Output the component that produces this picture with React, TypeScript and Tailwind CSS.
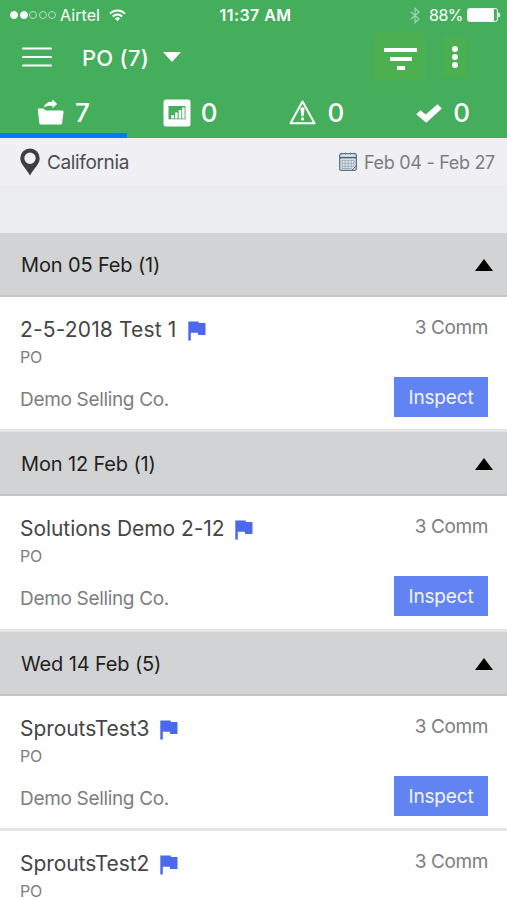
import type { ReactNode } from "react";
import clsx from "clsx";

interface Inspection {
  title: string;
  type: string;
  company?: string;
  comm: number;
  tracking: string;
}

interface DayGroup {
  label: string;
  items: Inspection[];
}

const groups: DayGroup[] = [
  {
    label: "Mon 05 Feb (1)",
    items: [
      { title: "2-5-2018 Test 1", type: "PO", company: "Demo Selling Co.", comm: 3, tracking: "tracking-[0.15px]" },
    ],
  },
  {
    label: "Mon 12 Feb (1)",
    items: [
      { title: "Solutions Demo 2-12", type: "PO", company: "Demo Selling Co.", comm: 3, tracking: "tracking-[-0.06px]" },
    ],
  },
  {
    label: "Wed 14 Feb (5)",
    items: [
      { title: "SproutsTest3", type: "PO", company: "Demo Selling Co.", comm: 3, tracking: "tracking-[-0.06px]" },
      { title: "SproutsTest2", type: "PO", comm: 3, tracking: "tracking-[-0.06px]" },
    ],
  },
];

function WifiIcon() {
  return (
    <svg width="17" height="13" viewBox="0 0 17 13" fill="none" stroke="white" strokeWidth="2">
      <path d="M1 4.6a10.6 10.6 0 0 1 15 0" />
      <path d="M3.8 7.5a6.7 6.7 0 0 1 9.4 0" />
      <path d="M8.5 12.3 5.9 9.6a3.7 3.7 0 0 1 5.2 0z" fill="white" stroke="none" />
    </svg>
  );
}

function BluetoothIcon() {
  return (
    <svg width="10" height="17" viewBox="0 0 10 17" fill="none" stroke="#9ed6ae" strokeWidth="1.2">
      <path d="M.8 4.8 9 12 5 15.7V1.3L9 5 .8 12.2" />
    </svg>
  );
}

function BatteryIcon() {
  return (
    <svg width="34" height="14" viewBox="0 0 34 14">
      <rect x=".6" y=".6" width="29.8" height="12.8" rx="1.8" fill="none" stroke="white" />
      <rect x="1" y="1" width="26" height="12" rx="1" fill="white" />
      <path d="M31.4 4.5c2.4.6 2.4 4.4 0 5z" fill="white" />
    </svg>
  );
}

function MenuIcon() {
  return (
    <svg width="30" height="20" viewBox="0 0 30 20" stroke="white" strokeWidth="2.2" strokeLinecap="round">
      <path d="M1.1 1.5h27.8M1.1 10h27.8M1.1 18.5h27.8" />
    </svg>
  );
}

function FolderIcon() {
  return (
    <svg width="27" height="27" viewBox="0 0 27 27" fill="white">
      <path d="M2 9.6h4.6l2 2h16.2c1.200 0 1.900.7 1.700 1.700l-1.400 10.600c-.2 1-.8 1.500-1.800 1.500H4c-1 0-1.600-.6-1.700-1.500L.9 10.900c-.1-.8.4-1.300 1.100-1.300z" />
      <path d="M6.8 8.600c1-4 4.200-5.900 8.700-5.900V.6l4.700 4.300-4.700 4.300V7c-3.200-.5-6.100-.2-8.700 1.600z" />
    </svg>
  );
}

function ChartIcon() {
  return (
    <svg width="28" height="28" viewBox="0 0 28 28">
      <rect x=".5" y=".5" width="27" height="27" rx="2.5" fill="white" />
      <rect x="5.5" y="7" width="17" height="13.3" fill="#44ae5c" />
      <path d="M8.300 16h2.600v3.500H8.300zM12 13.500h2.600v6H12zM15.700 11h2.600v8.500h-2.600zM19.200 8.500h2.400v11h-2.400z" fill="white" />
    </svg>
  );
}

function WarningIcon() {
  return (
    <svg width="27" height="25" viewBox="0 0 27 25">
      <path d="M13.500 1.500 25.500 23.300H1.500z" fill="none" stroke="white" strokeWidth="2" strokeLinejoin="round" />
      <path d="M11.500 8.800c0-2 4-2 4 0l-.9 7.400h-2.200z" fill="white" />
      <circle cx="13.500" cy="18.900" r="1.700" fill="white" />
    </svg>
  );
}

function CheckIcon() {
  return (
    <svg width="26" height="20" viewBox="0 0 26 20">
      <path d="M.2 11.300 4.400 7.200 9.800 11.500 21.500 1.200l4.400 4.300L10.300 19.800z" fill="white" />
    </svg>
  );
}

function PinIcon() {
  return (
    <svg width="20" height="28" viewBox="0 0 20 28">
      <path
        d="M10 .5A9.700 9.700 0 0 0 .3 10.200C.3 16.200 6.300 20.500 10 27.500c3.700-7 9.700-11.300 9.700-17.300A9.700 9.700 0 0 0 10 .5zm0 4a5.700 5.700 0 1 1 0 11.400 5.700 5.700 0 0 1 0-11.400z"
        fill="#3d3e42"
      />
    </svg>
  );
}

function CalendarIcon() {
  return (
    <svg width="18" height="19" viewBox="0 0 18 19" fill="none">
      <rect x=".7" y="1.700" width="16.600" height="16.600" rx="1.500" fill="#e3e8ed" stroke="#577187" strokeWidth="1.300" />
      <path d="M1 5.600h16" stroke="#4a657c" strokeWidth="1.600" />
      <path d="M3 .5v2M6.500 .5v2M11.500 .5v2M15 .5v2" stroke="#70869a" />
      <path
        d="M3 8.300h12M3 11.300h12M3 14.300h12M3.200 8v8.500M6.200 8v8.500M9.200 8v8.500M12.200 8v8.500M15 8v6.500M3 16.500h9.500"
        stroke="#98a7b5"
        strokeWidth=".9"
      />
      <path d="M13 18l4-4" stroke="#577187" />
    </svg>
  );
}

function FlagIcon() {
  return (
    <svg className="mt-[2px] shrink-0" width="18" height="20" viewBox="0 0 18 20">
      <path d="M.3.500H10.800v1.600h6.700v12H10v-2.300H2.800V19.500H.3z" fill="#4b68ee" />
    </svg>
  );
}

const tabs: { icon: ReactNode; count: number; className: string }[] = [
  { icon: <FolderIcon />, count: 7, className: "gap-[11px] pl-[37px]" },
  { icon: <ChartIcon />, count: 0, className: "gap-[10px] pl-[36px]" },
  { icon: <WarningIcon />, count: 0, className: "gap-[12px] pl-[35px]" },
  { icon: <CheckIcon />, count: 0, className: "gap-[11px] pl-[36px]" },
];

function StatusBar() {
  return (
    <div className="grid h-[30px] grid-cols-3 items-center text-[16px]">
      <div className="flex items-center pl-[10px]">
        <div className="flex gap-[1.5px]">
          {[true, true, false, false, false].map((on, i) => (
            <span
              key={i}
              className={clsx("size-[8px] rounded-full border", on ? "border-white bg-white" : "border-[#b5dfbf]")}
            />
          ))}
        </div>
        <span className="ml-[4px] mr-[9px] tracking-[0.07px]">Airtel</span>
        <WifiIcon />
      </div>
      <div className="flex justify-center pl-[4px]">
        <span className="font-semibold tracking-[0.44px]">11:37 AM</span>
      </div>
      <div className="flex items-center justify-end pr-[6px]">
        <BluetoothIcon />
        <span className="ml-[9px] mr-[4px] tracking-[-0.5px]">88%</span>
        <BatteryIcon />
      </div>
    </div>
  );
}

function NavBar() {
  return (
    <div className="flex h-[54px] items-center pl-[22px]">
      <button>
        <MenuIcon />
      </button>
      <span className="ml-[30px] mt-[2px] text-[22px] font-medium tracking-[0.23px]">PO (7)</span>
      <svg className="ml-[14px]" width="18" height="10" viewBox="0 0 18 10">
        <path d="M0 0h18L9 10z" fill="white" />
      </svg>
      <button className="ml-auto flex h-[48px] w-[52px] flex-col items-center justify-center gap-[5px] bg-[#4caf50] pl-[3px] pt-[4px]">
        <span className="h-[4px] w-[33px] bg-white" />
        <span className="h-[4px] w-[22px] bg-white" />
        <span className="h-[4px] w-[8px] bg-white" />
      </button>
      <button className="ml-[18px] mr-[40px] flex h-[40px] w-[24px] flex-col items-center justify-center gap-[2px] bg-[#4caf50]">
        <span className="size-[6px] rounded-full bg-white" />
        <span className="size-[6px] rounded-full bg-white" />
        <span className="size-[6px] rounded-full bg-white" />
      </button>
    </div>
  );
}

function TabBar() {
  return (
    <div className="grid h-[54px] grid-cols-4">
      {tabs.map((tab, i) => (
        <div
          key={i}
          className={clsx(
            "flex items-center border-b-[5px] pt-[8px]",
            tab.className,
            i === 0 ? "border-[#087bfa]" : "border-transparent"
          )}
        >
          {tab.icon}
          <span className="text-[26px] font-medium leading-none">{tab.count}</span>
        </div>
      ))}
    </div>
  );
}

function GroupHeader({ label }: { label: string }) {
  return (
    <div className="flex h-[64px] items-center justify-between border-b-2 border-[#c3c4c6] bg-[#d2d3d5] pl-[21px] pr-[14px] pt-[2px]">
      <h2 className="text-[20px] tracking-[-0.14px] text-[#1f1f20]">{label}</h2>
      <svg width="18" height="12" viewBox="0 0 18 12">
        <path d="M9 0l9 12H0z" fill="black" />
      </svg>
    </div>
  );
}

function InspectionRow({ item }: { item: Inspection }) {
  return (
    <div className="flex h-[135.4px] justify-between border-b-[3px] border-[#e4e5e6] bg-white pl-[20px] pr-[19px] text-[#7d7d7f]">
      <div className="flex flex-col items-start pt-[20px]">
        <div className="flex h-[26px] items-center gap-[11px]">
          <h3 className={clsx("text-[21px] leading-[26px] text-[#454547]", item.tracking)}>{item.title}</h3>
          <FlagIcon />
        </div>
        <p className="mt-[3px] text-[16px] leading-[22px] tracking-[-0.23px]">{item.type}</p>
        {item.company && (
          <p className="mt-[19px] text-[19px] leading-[26px] tracking-[-0.33px]">{item.company}</p>
        )}
      </div>
      <div className="flex flex-col items-end pt-[18px]">
        <p className="text-[19px] leading-[26px] tracking-[-0.4px]">{`${item.comm} Comm`}</p>
        {item.company && (
          <button className="mt-[36px] flex h-[40px] w-[94px] items-center justify-center bg-[#6283f2] pt-[2px] text-[19px] tracking-[-0.16px] text-[#f2f5ff]">
            Inspect
          </button>
        )}
      </div>
    </div>
  );
}

export default function App() {
  return (
    <div className="h-[900px] w-[507px] overflow-hidden bg-white font-['Inter',sans-serif]">
      <header className="h-[138px] bg-[#44ae5c] text-white">
        <StatusBar />
        <NavBar />
        <TabBar />
      </header>

      <div className="h-[95px] bg-[#ecedef]">
        <div className="flex h-[47px] items-center justify-between bg-[#efeff4] pl-[20px] pr-[12px]">
          <div className="flex items-center gap-[7px]">
            <PinIcon />
            <span className="mt-[3px] text-[19px] tracking-[-0.36px] text-[#4d4d50]">California</span>
          </div>
          <div className="flex items-center gap-[7px]">
            <CalendarIcon />
            <span className="mt-px text-[18px] tracking-[-0.3px] text-[#7d7d80]">Feb 04 - Feb 27</span>
          </div>
        </div>
      </div>

      {groups.map((group) => (
        <section key={group.label}>
          <GroupHeader label={group.label} />
          {group.items.map((item) => (
            <InspectionRow key={item.title} item={item} />
          ))}
        </section>
      ))}
    </div>
  );
}
